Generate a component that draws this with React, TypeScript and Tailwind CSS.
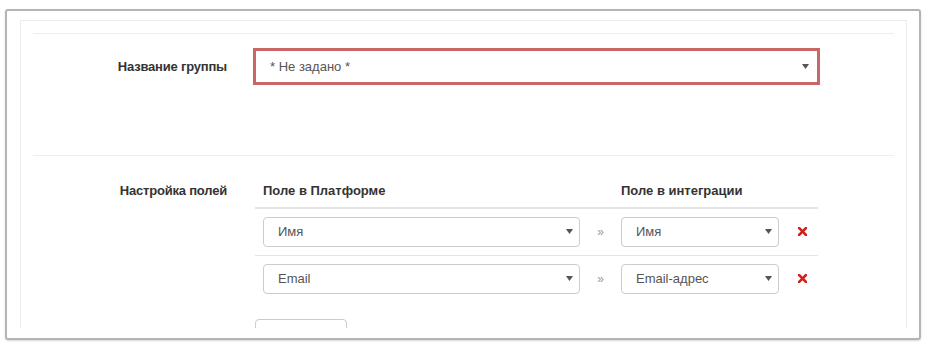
import React from "react"

function Caret() {
  return (
    <svg width="7" height="5" viewBox="0 0 7 5" className="shrink-0">
      <path d="M0 0 H7 L3.5 5 Z" fill="#555" />
    </svg>
  )
}

function Select({ value, className = "" }: { value: string; className?: string }) {
  return (
    <div
      className={`flex items-center justify-between h-[30px] pl-[14px] pr-[6px] border border-[#ccc] rounded-[4px] bg-white text-[13px] text-[#555] ${className}`}
    >
      <span>{value}</span>
      <Caret />
    </div>
  )
}

function RemoveIcon() {
  return (
    <svg width="9" height="9" viewBox="0 0 9 9">
      <path d="M1 1 L8 8 M8 1 L1 8" stroke="#d2231c" strokeWidth="2.6" strokeLinecap="square" />
    </svg>
  )
}

export default function App() {
  const mappings = [
    { platform: "Имя", integration: "Имя" },
    { platform: "Email", integration: "Email-адрес" },
  ]

  return (
    <div className="w-[928px] h-[352px] bg-white pt-[9px] pl-[5px] font-['Liberation_Sans',Arial,sans-serif] text-[#333]">
      {/* outer frame */}
      <div className="w-[916px] h-[331px] border-2 border-[#b4b4b4] rounded-[3px] shadow-[0_1px_2px_rgba(0,0,0,0.15)] pt-[9px] pl-[13px] pr-[12px] pb-[10px]">
        {/* inner panel */}
        <div className="h-full border-t border-l border-r border-[#ececec] overflow-hidden px-[12px] pt-[12px]">
          {/* group name */}
          <div className="flex items-start border-t border-[#eee] pt-[14px] pb-[70px]">
            <div className="w-[194px] text-right text-[13px] font-bold pt-[9px] tracking-[-0.2px]">Название группы</div>
            <div className="ml-[26px] w-[567px] h-[37px] flex items-center justify-between pl-[14px] pr-[8px] border-[3px] border-[#c96666] bg-white text-[13px] text-[#555]">
              <span>* Не задано *</span>
              <Caret />
            </div>
          </div>

          {/* field mapping */}
          <div className="flex items-start border-t border-[#eee]">
            <div className="w-[194px] text-right text-[13px] font-bold pt-[25px] tracking-[-0.2px]">Настройка полей</div>
            <div className="ml-[28px] w-[563px]">
              <div className="flex text-[13px] font-bold border-b-2 border-[#e3e3e3] pt-[25px] pb-[6px]">
                <div className="w-[358px] pl-[8px]">Поле в Платформе</div>
                <div className="pl-[8px]">Поле в интеграции</div>
              </div>
              {mappings.map((m, i) => (
                <div key={i} className={`flex items-center py-[8px] ${i > 0 ? "border-t border-[#e3e3e3]" : ""}`}>
                  <div className="w-[333px] px-[8px]">
                    <Select value={m.platform} />
                  </div>
                  <div className="w-[25px] text-center text-[12px] text-[#999]">»</div>
                  <div className="w-[174px] px-[8px]">
                    <Select value={m.integration} />
                  </div>
                  <div className="w-[31px] flex justify-center">
                    <RemoveIcon />
                  </div>
                </div>
              ))}
              <div className="mt-[17px] w-[92px] h-[34px] border border-[#ccc] rounded-[4px] text-[13px] pl-[12px] pt-[8px] text-[#333]">
                + Добавить
              </div>
            </div>
          </div>
        </div>
      </div>
    </div>
  )
}
